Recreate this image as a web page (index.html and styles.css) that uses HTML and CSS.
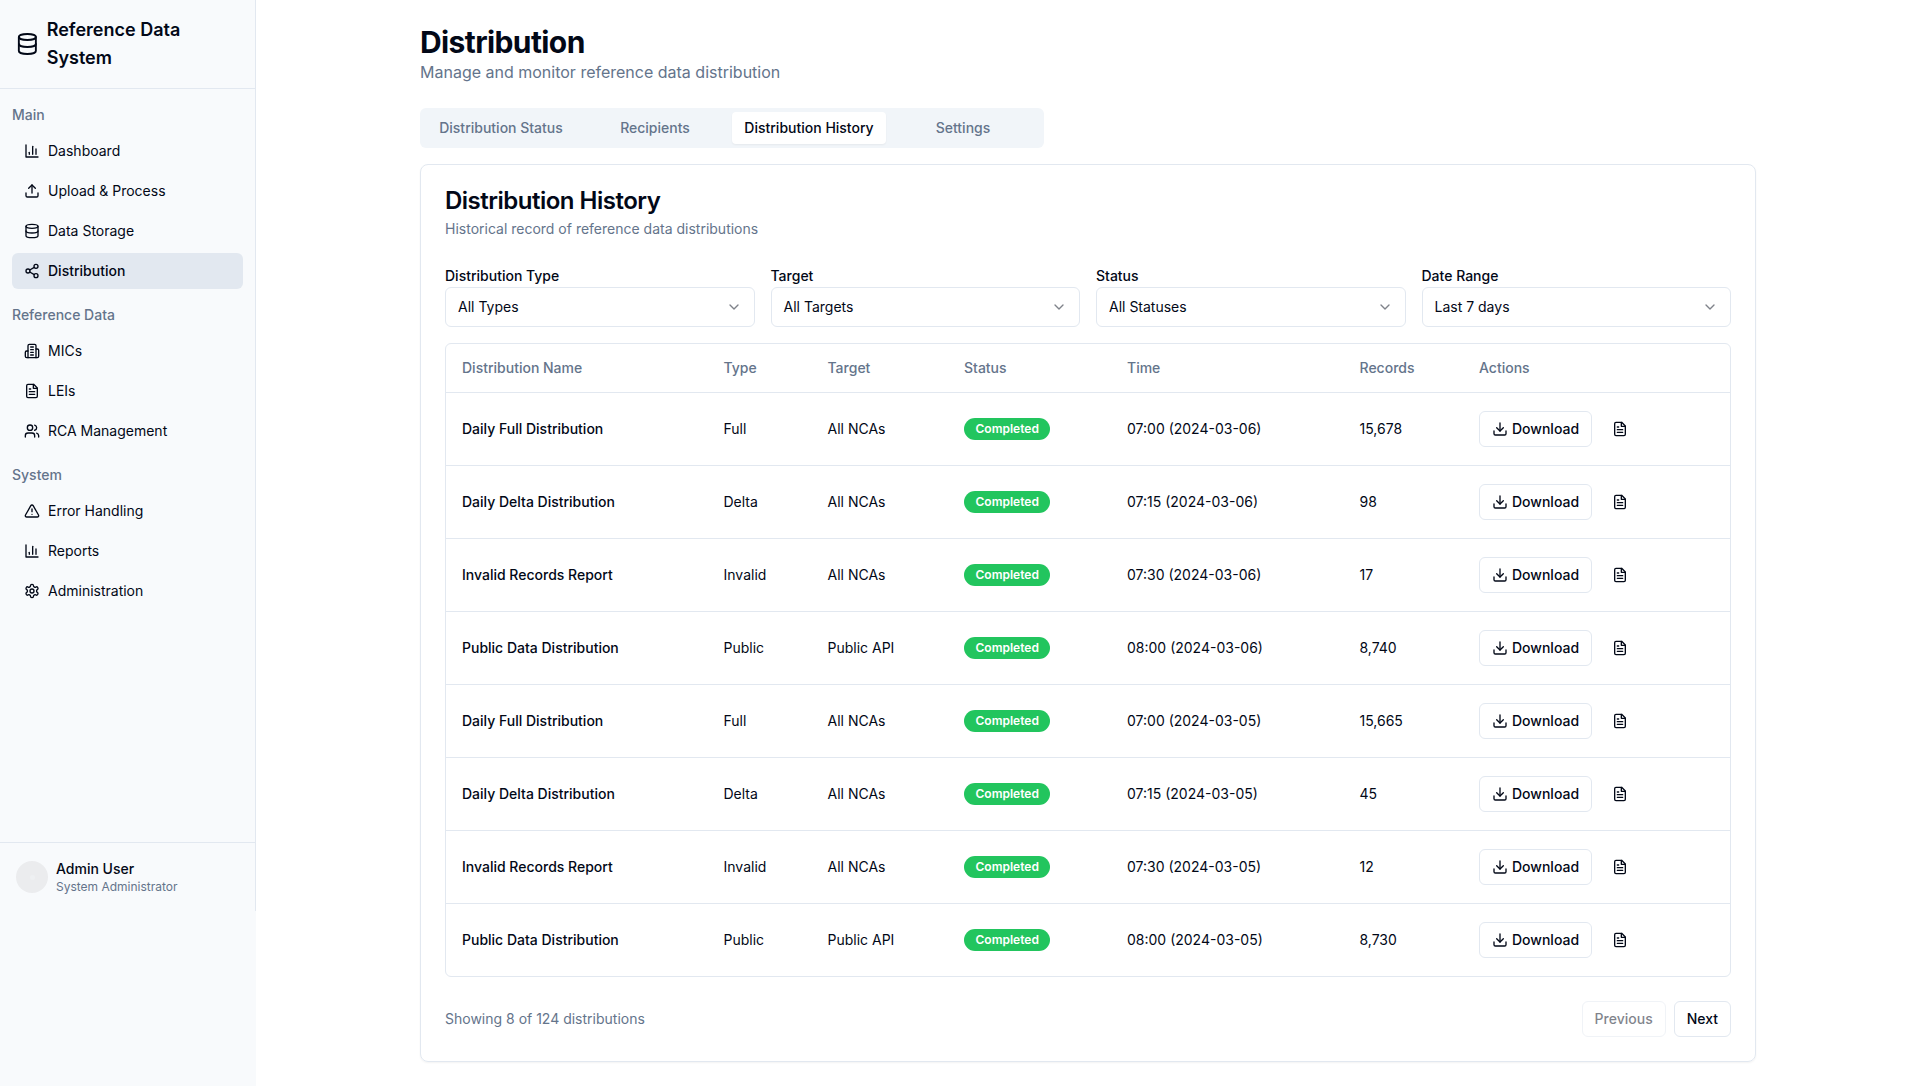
FILE: index.html
```html
<!DOCTYPE html>
<html lang="en">
<head>
  <meta charset="UTF-8" />
  <meta name="viewport" content="width=device-width, initial-scale=1" />
  <title>Distribution - Reference Data System</title>
  <link rel="stylesheet" href="styles.css">
</head>
<body>

  <svg class="icon-defs" aria-hidden="true">
    <symbol id="i-database" viewBox="0 0 24 24" preserveAspectRatio="none"><ellipse cx="12" cy="5" rx="9" ry="3"/><path d="M3 5V19A9 3 0 0 0 21 19V5"/><path d="M3 12A9 3 0 0 0 21 12"/></symbol>
    <symbol id="i-chart" viewBox="0 0 24 24"><path d="M3 3v18h18"/><path d="M18 17V9"/><path d="M13 17V5"/><path d="M8 17v-3"/></symbol>
    <symbol id="i-upload" viewBox="0 0 24 24"><path d="M21 15v4a2 2 0 0 1-2 2H5a2 2 0 0 1-2-2v-4"/><polyline points="17 8 12 3 7 8"/><line x1="12" x2="12" y1="3" y2="15"/></symbol>
    <symbol id="i-share" viewBox="0 0 24 24"><circle cx="18" cy="5" r="3"/><circle cx="6" cy="12" r="3"/><circle cx="18" cy="19" r="3"/><line x1="8.59" x2="15.42" y1="13.51" y2="17.49"/><line x1="15.41" x2="8.59" y1="6.51" y2="10.49"/></symbol>
    <symbol id="i-building" viewBox="0 0 24 24"><path d="M6 22V4a2 2 0 0 1 2-2h8a2 2 0 0 1 2 2v18Z"/><path d="M6 12H4a2 2 0 0 0-2 2v6a2 2 0 0 0 2 2h2"/><path d="M18 9h2a2 2 0 0 1 2 2v9a2 2 0 0 1-2 2h-2"/><path d="M10 6h4"/><path d="M10 10h4"/><path d="M10 14h4"/><path d="M10 18h4"/></symbol>
    <symbol id="i-file" viewBox="0 0 24 24"><path d="M14.5 2H6a2 2 0 0 0-2 2v16a2 2 0 0 0 2 2h12a2 2 0 0 0 2-2V7.5L14.5 2z"/><polyline points="14 2 14 8 20 8"/><line x1="16" x2="8" y1="13" y2="13"/><line x1="16" x2="8" y1="17" y2="17"/><line x1="10" x2="8" y1="9" y2="9"/></symbol>
    <symbol id="i-users" viewBox="0 0 24 24"><path d="M16 21v-2a4 4 0 0 0-4-4H6a4 4 0 0 0-4 4v2"/><circle cx="9" cy="7" r="4"/><path d="M22 21v-2a4 4 0 0 0-3-3.87"/><path d="M16 3.13a4 4 0 0 1 0 7.75"/></symbol>
    <symbol id="i-alert" viewBox="0 0 24 24"><path d="m21.73 18-8-14a2 2 0 0 0-3.48 0l-8 14A2 2 0 0 0 4 21h16a2 2 0 0 0 1.73-3Z"/><path d="M12 9v4"/><path d="M12 17h.01"/></symbol>
    <symbol id="i-settings" viewBox="0 0 24 24"><path d="M12.22 2h-.44a2 2 0 0 0-2 2v.18a2 2 0 0 1-1 1.73l-.43.25a2 2 0 0 1-2 0l-.15-.08a2 2 0 0 0-2.73.73l-.22.38a2 2 0 0 0 .73 2.73l.15.1a2 2 0 0 1 1 1.72v.51a2 2 0 0 1-1 1.74l-.15.09a2 2 0 0 0-.73 2.73l.22.38a2 2 0 0 0 2.73.73l.15-.08a2 2 0 0 1 2 0l.43.25a2 2 0 0 1 1 1.73V20a2 2 0 0 0 2 2h.44a2 2 0 0 0 2-2v-.18a2 2 0 0 1 1-1.73l.43-.25a2 2 0 0 1 2 0l.15.08a2 2 0 0 0 2.73-.73l.22-.39a2 2 0 0 0-.73-2.73l-.15-.08a2 2 0 0 1-1-1.74v-.5a2 2 0 0 1 1-1.74l.15-.09a2 2 0 0 0 .73-2.73l-.22-.38a2 2 0 0 0-2.73-.73l-.15.08a2 2 0 0 1-2 0l-.43-.25a2 2 0 0 1-1-1.73V4a2 2 0 0 0-2-2z"/><circle cx="12" cy="12" r="3"/></symbol>
    <symbol id="i-download" viewBox="0 0 24 24"><path d="M21 15v4a2 2 0 0 1-2 2H5a2 2 0 0 1-2-2v-4"/><polyline points="7 10 12 15 17 10"/><line x1="12" x2="12" y1="15" y2="3"/></symbol>
    <symbol id="i-chevron" viewBox="0 0 24 24"><path d="m6 9 6 6 6-6"/></symbol>
  </svg>

  <div class="layout">
    <aside class="sidebar">
      <div class="sidebar-inner">
        <div class="brand">
          <svg class="icon-lg"><use href="#i-database"/></svg>
          <span class="brand-name">Reference Data System</span>
        </div>

        <nav class="nav">
          <div class="nav-group">
            <div class="nav-label">Main</div>
            <a href="#" class="nav-item"><svg class="icon"><use href="#i-chart"/></svg>Dashboard</a>
            <a href="#" class="nav-item"><svg class="icon"><use href="#i-upload"/></svg>Upload &amp; Process</a>
            <a href="#" class="nav-item"><svg class="icon"><use href="#i-database"/></svg>Data Storage</a>
            <a href="#" class="nav-item active"><svg class="icon"><use href="#i-share"/></svg>Distribution</a>
          </div>
          <div class="nav-group">
            <div class="nav-label">Reference Data</div>
            <a href="#" class="nav-item"><svg class="icon"><use href="#i-building"/></svg>MICs</a>
            <a href="#" class="nav-item"><svg class="icon"><use href="#i-file"/></svg>LEIs</a>
            <a href="#" class="nav-item"><svg class="icon"><use href="#i-users"/></svg>RCA Management</a>
          </div>
          <div class="nav-group">
            <div class="nav-label">System</div>
            <a href="#" class="nav-item"><svg class="icon"><use href="#i-alert"/></svg>Error Handling</a>
            <a href="#" class="nav-item"><svg class="icon"><use href="#i-chart"/></svg>Reports</a>
            <a href="#" class="nav-item"><svg class="icon"><use href="#i-settings"/></svg>Administration</a>
          </div>
        </nav>

        <div class="user">
          <div class="avatar"><span class="avatar-dot"></span></div>
          <div>
            <div class="user-name">Admin User</div>
            <div class="user-role">System Administrator</div>
          </div>
        </div>
      </div>
    </aside>

    <main class="main">
      <h1>Distribution</h1>
      <p class="page-sub">Manage and monitor reference data distribution</p>

      <div class="tabs">
        <button class="tab">Distribution Status</button>
        <button class="tab">Recipients</button>
        <button class="tab active">Distribution History</button>
        <button class="tab">Settings</button>
      </div>

      <section class="card">
        <h2>Distribution History</h2>
        <p class="card-sub">Historical record of reference data distributions</p>

        <div class="filters">
          <div class="filter">
            <label>Distribution Type</label>
            <button class="select">All Types<svg class="icon chevron"><use href="#i-chevron"/></svg></button>
          </div>
          <div class="filter">
            <label>Target</label>
            <button class="select">All Targets<svg class="icon chevron"><use href="#i-chevron"/></svg></button>
          </div>
          <div class="filter">
            <label>Status</label>
            <button class="select">All Statuses<svg class="icon chevron"><use href="#i-chevron"/></svg></button>
          </div>
          <div class="filter">
            <label>Date Range</label>
            <button class="select">Last 7 days<svg class="icon chevron"><use href="#i-chevron"/></svg></button>
          </div>
        </div>

        <div class="table-wrap">
          <table>
            <thead>
              <tr>
                <th>Distribution Name</th>
                <th>Type</th>
                <th>Target</th>
                <th>Status</th>
                <th>Time</th>
                <th>Records</th>
                <th>Actions</th>
              </tr>
            </thead>
            <tbody>
              <tr>
                <td class="name">Daily Full Distribution</td>
                <td>Full</td>
                <td>All NCAs</td>
                <td><span class="badge">Completed</span></td>
                <td>07:00 (2024-03-06)</td>
                <td>15,678</td>
                <td><div class="actions"><button class="btn"><svg class="icon"><use href="#i-download"/></svg>Download</button><button class="icon-btn"><svg class="icon"><use href="#i-file"/></svg></button></div></td>
              </tr>
              <tr>
                <td class="name">Daily Delta Distribution</td>
                <td>Delta</td>
                <td>All NCAs</td>
                <td><span class="badge">Completed</span></td>
                <td>07:15 (2024-03-06)</td>
                <td>98</td>
                <td><div class="actions"><button class="btn"><svg class="icon"><use href="#i-download"/></svg>Download</button><button class="icon-btn"><svg class="icon"><use href="#i-file"/></svg></button></div></td>
              </tr>
              <tr>
                <td class="name">Invalid Records Report</td>
                <td>Invalid</td>
                <td>All NCAs</td>
                <td><span class="badge">Completed</span></td>
                <td>07:30 (2024-03-06)</td>
                <td>17</td>
                <td><div class="actions"><button class="btn"><svg class="icon"><use href="#i-download"/></svg>Download</button><button class="icon-btn"><svg class="icon"><use href="#i-file"/></svg></button></div></td>
              </tr>
              <tr>
                <td class="name">Public Data Distribution</td>
                <td>Public</td>
                <td>Public API</td>
                <td><span class="badge">Completed</span></td>
                <td>08:00 (2024-03-06)</td>
                <td>8,740</td>
                <td><div class="actions"><button class="btn"><svg class="icon"><use href="#i-download"/></svg>Download</button><button class="icon-btn"><svg class="icon"><use href="#i-file"/></svg></button></div></td>
              </tr>
              <tr>
                <td class="name">Daily Full Distribution</td>
                <td>Full</td>
                <td>All NCAs</td>
                <td><span class="badge">Completed</span></td>
                <td>07:00 (2024-03-05)</td>
                <td>15,665</td>
                <td><div class="actions"><button class="btn"><svg class="icon"><use href="#i-download"/></svg>Download</button><button class="icon-btn"><svg class="icon"><use href="#i-file"/></svg></button></div></td>
              </tr>
              <tr>
                <td class="name">Daily Delta Distribution</td>
                <td>Delta</td>
                <td>All NCAs</td>
                <td><span class="badge">Completed</span></td>
                <td>07:15 (2024-03-05)</td>
                <td>45</td>
                <td><div class="actions"><button class="btn"><svg class="icon"><use href="#i-download"/></svg>Download</button><button class="icon-btn"><svg class="icon"><use href="#i-file"/></svg></button></div></td>
              </tr>
              <tr>
                <td class="name">Invalid Records Report</td>
                <td>Invalid</td>
                <td>All NCAs</td>
                <td><span class="badge">Completed</span></td>
                <td>07:30 (2024-03-05)</td>
                <td>12</td>
                <td><div class="actions"><button class="btn"><svg class="icon"><use href="#i-download"/></svg>Download</button><button class="icon-btn"><svg class="icon"><use href="#i-file"/></svg></button></div></td>
              </tr>
              <tr>
                <td class="name">Public Data Distribution</td>
                <td>Public</td>
                <td>Public API</td>
                <td><span class="badge">Completed</span></td>
                <td>08:00 (2024-03-05)</td>
                <td>8,730</td>
                <td><div class="actions"><button class="btn"><svg class="icon"><use href="#i-download"/></svg>Download</button><button class="icon-btn"><svg class="icon"><use href="#i-file"/></svg></button></div></td>
              </tr>
            </tbody>
          </table>
        </div>

        <div class="pager">
          <span class="pager-info">Showing 8 of 124 distributions</span>
          <div class="pager-btns">
            <button class="btn disabled">Previous</button>
            <button class="btn">Next</button>
          </div>
        </div>
      </section>
    </main>
  </div>

</body>
</html>
```

FILE: styles.css
```css
* {
  box-sizing: border-box;
}

body {
  margin: 0;
  font-family: Inter, "Liberation Sans", sans-serif;
  font-size: 14px;
  line-height: 20px;
  color: #020817;
  background: #fff;
}

button {
  font: inherit;
  color: inherit;
  background: none;
  border: none;
  padding: 0;
}

.icon-defs {
  display: none;
}

.icon,
.icon-lg {
  fill: none;
  stroke: currentColor;
  stroke-width: 2;
  stroke-linecap: round;
  stroke-linejoin: round;
}

.icon {
  width: 16px;
  height: 16px;
  flex-shrink: 0;
}

.icon-lg {
  width: 24px;
  height: 24px;
}

.layout {
  display: flex;
  min-height: 1086px;
}

/* sidebar */
.sidebar {
  width: 256px;
  flex-shrink: 0;
  background: #f8fafc;
}

.sidebar-inner {
  height: 911px;
  display: flex;
  flex-direction: column;
  border-right: 1px solid #e2e8f0;
}

.brand {
  display: flex;
  align-items: center;
  gap: 8px;
  padding: 16px;
  border-bottom: 1px solid #e2e8f0;
}

.brand-name {
  font-size: 18px;
  line-height: 28px;
  font-weight: 600;
}

.nav {
  flex: 1;
  padding: 16px 12px 0;
}

.nav-group {
  margin-bottom: 16px;
}

.nav-label {
  color: #64748b;
  font-weight: 500;
  margin-bottom: 8px;
}

.nav-item {
  display: flex;
  align-items: center;
  gap: 8px;
  height: 36px;
  padding: 0 12px;
  margin-bottom: 4px;
  border-radius: 6px;
  color: #020817;
  text-decoration: none;
}

.nav-item:last-child {
  margin-bottom: 0;
}

.nav-item.active {
  background: #e2e8f0;
  font-weight: 500;
}

.user {
  display: flex;
  align-items: center;
  gap: 8px;
  padding: 16px;
  border-top: 1px solid #e2e8f0;
}

.avatar {
  width: 32px;
  height: 32px;
  border-radius: 50%;
  background: #ebecee;
  display: flex;
  align-items: center;
  justify-content: center;
}

.avatar-dot {
  width: 5px;
  height: 5px;
  border-radius: 50%;
  background: #eef0f2;
}

.user-name {
  font-weight: 500;
}

.user-role {
  font-size: 12px;
  line-height: 16px;
  color: #64748b;
}

/* main area */
.main {
  flex: 1;
  padding: 24px 32px;
  max-width: 1400px;
  margin: 0 auto;
}

h1 {
  margin: 0;
  font-size: 30px;
  line-height: 36px;
  font-weight: 700;
  letter-spacing: -0.6px;
}

.page-sub {
  margin: 0 0 24px;
  font-size: 16px;
  line-height: 24px;
  color: #64748b;
}

.tabs {
  display: grid;
  grid-template-columns: repeat(4, 1fr);
  width: 624px;
  height: 40px;
  padding: 4px;
  margin-bottom: 16px;
  background: #f1f5f9;
  border-radius: 6px;
}

.tab {
  font-weight: 500;
  color: #64748b;
  border-radius: 4px;
}

.tab.active {
  background: #fff;
  color: #020817;
  box-shadow: 0 1px 2px rgba(0, 0, 0, 0.05);
}

.card {
  padding: 24px;
  border: 1px solid #e2e8f0;
  border-radius: 8px;
  box-shadow: 0 1px 2px rgba(0, 0, 0, 0.05);
}

h2 {
  margin: 0;
  font-size: 24px;
  line-height: 24px;
  font-weight: 600;
  letter-spacing: -0.5px;
}

.card-sub {
  margin: 6px 0 0;
  color: #64748b;
}

.filters {
  display: grid;
  grid-template-columns: repeat(4, 1fr);
  gap: 16px;
  margin: 27px 0 16px;
}

.filter label {
  display: block;
  font-weight: 500;
  margin-bottom: 1px;
}

.select {
  display: flex;
  align-items: center;
  justify-content: space-between;
  width: 100%;
  height: 40px;
  padding: 0 12px;
  border: 1px solid #e2e8f0;
  border-radius: 6px;
  background: #fff;
}

.chevron {
  opacity: 0.5;
}

.table-wrap {
  border: 1px solid #e2e8f0;
  border-radius: 6px;
  overflow: hidden;
}

table {
  width: 100%;
  border-collapse: collapse;
  table-layout: fixed;
}

thead th {
  height: 48px;
  padding: 0 16px;
  text-align: left;
  font-weight: 500;
  color: #64748b;
  border-bottom: 1px solid #e2e8f0;
}

thead th:nth-child(1) { width: 261.5px; }
thead th:nth-child(2) { width: 104px; }
thead th:nth-child(3) { width: 136.5px; }
thead th:nth-child(4) { width: 163px; }
thead th:nth-child(5) { width: 232.5px; }
thead th:nth-child(6) { width: 119.5px; }

tbody td {
  height: 73px;
  padding: 0 16px;
  vertical-align: middle;
  border-bottom: 1px solid #e2e8f0;
}

tbody tr:last-child td {
  border-bottom: none;
}

.name {
  font-weight: 500;
}

.badge {
  display: inline-block;
  padding: 2px 10.5px;
  border: 1px solid transparent;
  border-radius: 999px;
  background: #22c55e;
  color: #fff;
  font-size: 12px;
  line-height: 16px;
  font-weight: 600;
}

.actions {
  display: flex;
  align-items: center;
  gap: 8px;
}

.btn {
  display: inline-flex;
  align-items: center;
  gap: 4px;
  height: 36px;
  padding: 0 12px;
  border: 1px solid #e2e8f0;
  border-radius: 6px;
  background: #fff;
  font-weight: 500;
}

.btn.disabled {
  opacity: 0.5;
}

.icon-btn {
  display: inline-flex;
  align-items: center;
  justify-content: center;
  width: 40px;
  height: 36px;
}

.pager {
  display: flex;
  align-items: center;
  justify-content: space-between;
  margin-top: 24px;
}

.pager-info {
  color: #64748b;
}

.pager-btns {
  display: flex;
  gap: 8px;
}
```
